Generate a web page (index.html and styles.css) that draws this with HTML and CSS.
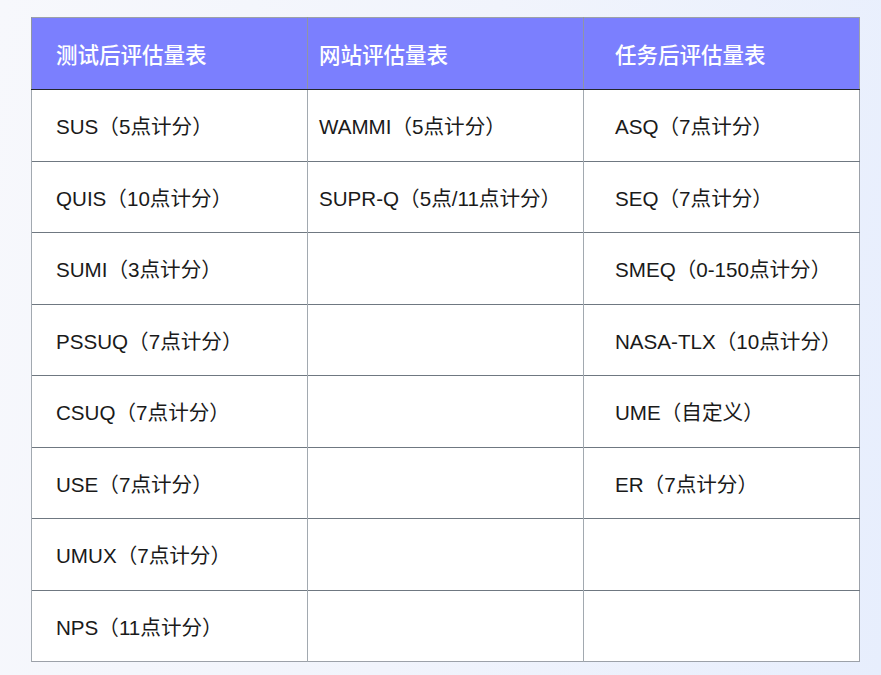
FILE: index.html
```html
<!DOCTYPE html>
<html lang="zh-CN">
<head>
<meta charset="utf-8">
<title>评估量表</title>
<link rel="stylesheet" href="styles.css">
</head>
<body>
<div class="page">
  <table class="scales">
    <thead>
      <tr>
        <th class="c1">测试后评估量表</th>
        <th class="c2">网站评估量表</th>
        <th class="c3">任务后评估量表</th>
      </tr>
    </thead>
    <tbody>
      <tr><td class="c1">SUS（5点计分）</td><td class="c2">WAMMI（5点计分）</td><td class="c3">ASQ（7点计分）</td></tr>
      <tr><td class="c1">QUIS（10点计分）</td><td class="c2">SUPR-Q（5点/11点计分）</td><td class="c3">SEQ（7点计分）</td></tr>
      <tr><td class="c1">SUMI（3点计分）</td><td class="c2"></td><td class="c3">SMEQ（0-150点计分）</td></tr>
      <tr><td class="c1">PSSUQ（7点计分）</td><td class="c2"></td><td class="c3">NASA-TLX（10点计分）</td></tr>
      <tr><td class="c1">CSUQ（7点计分）</td><td class="c2"></td><td class="c3">UME（自定义）</td></tr>
      <tr><td class="c1">USE（7点计分）</td><td class="c2"></td><td class="c3">ER（7点计分）</td></tr>
      <tr><td class="c1">UMUX（7点计分）</td><td class="c2"></td><td class="c3"></td></tr>
      <tr><td class="c1">NPS（11点计分）</td><td class="c2"></td><td class="c3"></td></tr>
    </tbody>
  </table>
</div>
</body>
</html>
```

FILE: styles.css
```css
html, body {
  margin: 0;
  padding: 0;
}
body {
  width: 881px;
  height: 675px;
  background: linear-gradient(100deg, #f7f8fc 0%, #f1f4fc 50%, #e7eefd 100%);
  font-family: "Liberation Sans", "Noto Sans CJK SC", sans-serif;
  color: #1a1a1a;
  overflow: hidden;
}
.page {
  padding: 17px 0 0 31px;
}
.scales {
  border-collapse: collapse;
  width: 829px;
  table-layout: fixed;
  background: #ffffff;
  border: 1.5px solid #9ca1a9;
}
.scales th {
  background: #7b7ffe;
  color: #ffffff;
  font-weight: 500;
  font-size: 21.5px;
  text-align: left;
  height: 72px;
  padding: 0;
  border-left: 1.5px solid #8f95a6;
  border-bottom: 1.5px solid #23262c;
  box-sizing: border-box;
}
.scales td {
  font-size: 20.6px;
  height: 71.5px;
  padding: 0;
  border-left: 1.5px solid #a2a9b0;
  border-top: 1px solid #6f7881;
  box-sizing: border-box;
}
.scales .c1 { padding-left: 24px; width: 276px; }
.scales .c2 { padding-left: 11px; width: 276px; }
.scales .c3 { padding-left: 31px; }
```
